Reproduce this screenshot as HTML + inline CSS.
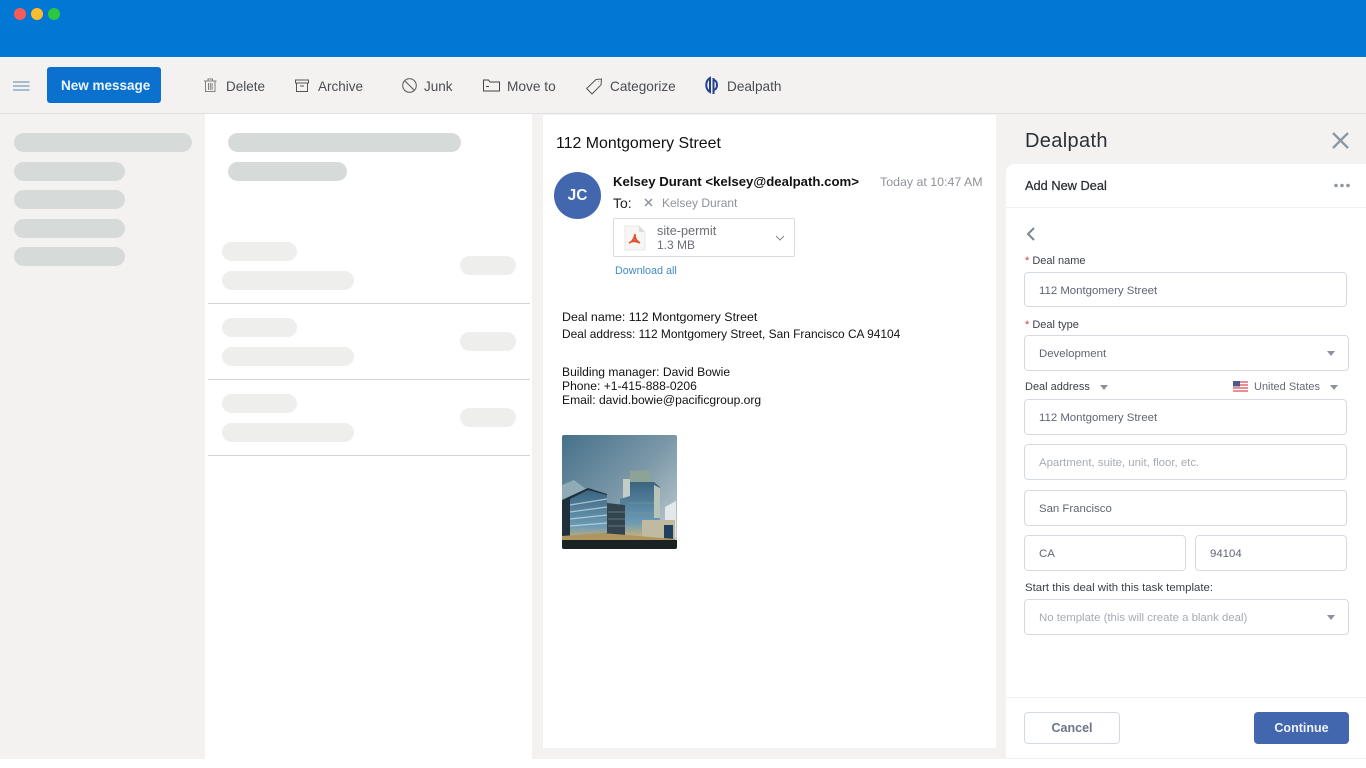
<!DOCTYPE html>
<html lang="en"><head><meta charset="utf-8"><title>Dealpath</title>
<style>
html,body{margin:0;padding:0;width:1366px;height:768px;overflow:hidden;background:#fff}
body{position:relative;font-family:"Liberation Sans",sans-serif;color:#333}
.a,.t,.i,.s{position:absolute}
.t{white-space:nowrap;line-height:1}
.s{background:#d6dbda;border-radius:10px}
.g{background:#eeeeed;border-radius:10px;position:absolute}
.i{box-sizing:border-box;background:#fff;border:1px solid #d5dae1;border-radius:4px;left:1024px;width:323px;height:36px;font-size:11.4px;color:#5f6670;line-height:36px;padding-left:14px;white-space:nowrap}
.tb{font-size:13.5px;color:#4a4d52;top:80px}
.l{font-size:11px;color:#3c4148}
.c{position:absolute;width:0;height:0;border-left:4.5px solid transparent;border-right:4.5px solid transparent;border-top:5px solid #8b929b}
.m{font-size:12.1px;color:#111}
hr{position:absolute;margin:0;border:0;height:1px;background:#d2d6d6;left:208px;width:322px}
svg{position:absolute;overflow:visible}
</style></head><body>
<div class="a" style="left:0;top:0;width:1366px;height:57px;background:#0277d3"></div>
<div class="a" style="left:14px;top:8px;width:12px;height:12px;border-radius:50%;background:#f95b57"></div>
<div class="a" style="left:31px;top:8px;width:12px;height:12px;border-radius:50%;background:#fbbb2e"></div>
<div class="a" style="left:48px;top:8px;width:12px;height:12px;border-radius:50%;background:#2cc840"></div>
<div class="a" style="left:0;top:57px;width:1366px;height:57px;background:#f3f2f1"></div>
<div class="a" style="left:0;top:113px;width:1366px;height:1px;background:#e0e0e2"></div>
<div class="a" style="left:0;top:114px;width:205px;height:645px;background:#f3f2f1"></div>
<div class="a" style="left:532px;top:114px;width:834px;height:645px;background:#f3f2f1"></div>
<div class="a" style="left:543px;top:115px;width:453px;height:633px;background:#fff"></div>

<svg style="left:13px;top:81px" width="18" height="11" fill="none" stroke="#5a88b0" stroke-width="1"><path d="M0 1h16.500M0 5h16.500M0 9h16.500"/></svg>
<div class="a" style="left:47px;top:67px;width:114px;height:36px;background:#0a71cf;border-radius:3px"></div>
<div class="t" style="left:61px;top:79px;font-size:13.5px;font-weight:700;color:#eef6fd">New message</div>

<svg style="left:204px;top:78px" width="13" height="15" fill="none" stroke="#808080" stroke-width="1"><path d="M0 3h12.500M4 3V1h4.500v2M1.500 3v10.500h9.500V3M4.500 5v7M6.300 5v7M8.100 5v7"/></svg>
<div class="t tb" style="left:226px">Delete</div>
<svg style="left:295px;top:79px" width="15" height="14" fill="none" stroke="#555" stroke-width="1"><path d="M.5 1h13v3h-13zM1.500 4v8.500h11V4M5 7h4"/></svg>
<div class="t tb" style="left:318px">Archive</div>
<svg style="left:402px;top:78px" width="15" height="15" fill="none" stroke="#666" stroke-width="1.100"><circle cx="7.500" cy="7.500" r="6.800"/><path d="M2.700 2.700l9.600 9.600"/></svg>
<div class="t tb" style="left:424px">Junk</div>
<svg style="left:483px;top:79px" width="17" height="13" fill="none" stroke="#444" stroke-width="1"><path d="M.5 12V1h5l1.500 2h9.500v9zM3 7.500h3"/></svg>
<div class="t tb" style="left:507px;font-size:13.700px">Move to</div>
<svg style="left:586px;top:78px" width="17" height="17" fill="none" stroke="#555" stroke-width="1"><path d="M.7 10.500L10 1.500l5.500-.5-.5 5.800-9 9.200zM12.300 3.500h.5"/></svg>
<div class="t tb" style="left:610px;font-size:13.600px">Categorize</div>
<svg style="left:704px;top:76px" width="16" height="19" fill="none" stroke="#23418f" stroke-width="2"><path d="M6 2C1 5 1 13 6 16zM9.500 2v16M10 4c4 1 4 9 0 10"/></svg>
<div class="t tb" style="left:727px;font-size:13.600px">Dealpath</div>

<div class="s" style="left:14px;top:133px;width:178px;height:19px"></div>
<div class="s" style="left:14px;top:162px;width:111px;height:19px"></div>
<div class="s" style="left:14px;top:190px;width:111px;height:19px"></div>
<div class="s" style="left:14px;top:219px;width:111px;height:19px"></div>
<div class="s" style="left:14px;top:247px;width:111px;height:19px"></div>
<div class="s" style="left:228px;top:133px;width:233px;height:19px"></div>
<div class="s" style="left:228px;top:162px;width:119px;height:19px"></div>

<div class="g" style="left:222px;top:242px;width:75px;height:19px"></div>
<div class="g" style="left:222px;top:271px;width:132px;height:19px"></div>
<div class="g" style="left:460px;top:256px;width:56px;height:19px"></div>
<hr style="top:303px">
<div class="g" style="left:222px;top:318px;width:75px;height:19px"></div>
<div class="g" style="left:222px;top:347px;width:132px;height:19px"></div>
<div class="g" style="left:460px;top:332px;width:56px;height:19px"></div>
<hr style="top:379px">
<div class="g" style="left:222px;top:394px;width:75px;height:19px"></div>
<div class="g" style="left:222px;top:423px;width:132px;height:19px"></div>
<div class="g" style="left:460px;top:408px;width:56px;height:19px"></div>
<hr style="top:455px">

<div class="t" style="left:556px;top:136px;font-size:15.900px;color:#111">112 Montgomery Street</div>
<div class="a" style="left:554px;top:172px;width:47px;height:47px;border-radius:50%;background:#4267ae"></div>
<div class="t" style="left:554px;top:188px;width:47px;text-align:center;font-size:15.500px;font-weight:700;color:#f3f6fb">JC</div>
<div class="t" style="left:613px;top:175px;font-size:13.200px;font-weight:700;color:#111">Kelsey Durant &lt;kelsey@dealpath.com&gt;</div>
<div class="t" style="left:880px;top:176px;font-size:12.400px;color:#8e9298">Today at 10:47 AM</div>
<div class="t" style="left:613px;top:196px;font-size:14px;color:#222">To:</div>
<svg style="left:644px;top:198px" width="9" height="9" fill="none" stroke="#8d939b" stroke-width="1.500"><path d="M1 1l7 7M8 1l-7 7"/></svg>
<div class="t" style="left:662px;top:197px;font-size:12px;color:#8e9298">Kelsey Durant</div>
<div class="a" style="left:613px;top:218px;width:180px;height:37px;border:1px solid #d8dadd;border-radius:2px"></div>
<svg style="left:624px;top:226px" width="22" height="25"><path d="M1 0h14l6 6v18H1z" fill="#f7f6f5" stroke="#e9e8e6"/><path d="M15 0v6h6z" fill="#dddcda"/><path d="M5 17c3-1 5-4 6-9 0 5 2 7 5 9-4-2-8-2-11 0z" fill="#dc6a4a" stroke="#d9512c" stroke-width="1.500"/></svg>
<div class="t" style="left:657px;top:225px;font-size:12.700px;color:#6b6f75">site-permit</div>
<div class="t" style="left:657px;top:239px;font-size:12px;color:#6b6f75">1.3 MB</div>
<svg style="left:775px;top:235px" width="10" height="7" fill="none" stroke="#858b92" stroke-width="1"><path d="M1 1l4 4 4-4"/></svg>
<div class="t" style="left:615px;top:266px;font-size:10.800px;color:#418bc8">Download all</div>

<div class="t m" style="left:562px;top:311px;font-size:12.400px">Deal name: 112 Montgomery Street</div>
<div class="t m" style="left:562px;top:329px;font-size:11.900px">Deal address: 112 Montgomery Street, San Francisco CA 94104</div>
<div class="t m" style="left:562px;top:366px">Building manager: David Bowie</div>
<div class="t m" style="left:562px;top:380px">Phone: +1-415-888-0206</div>
<div class="t m" style="left:562px;top:394px">Email: david.bowie@pacificgroup.org</div>

<svg style="left:562px;top:435px;border-radius:2px;overflow:hidden" width="115" height="114" viewBox="0 0 115 114">
<defs><linearGradient id="sky" x1="0" y1="0" x2="1" y2="1"><stop offset="0" stop-color="#45718a"/><stop offset=".5" stop-color="#7c98a8"/><stop offset="1" stop-color="#c9d3d8"/></linearGradient>
<linearGradient id="bl" x1="0" y1="0" x2="0" y2="1"><stop offset="0" stop-color="#3a6480"/><stop offset=".75" stop-color="#6d9cb5"/><stop offset="1" stop-color="#c8b07c"/></linearGradient></defs>
<rect width="115" height="114" fill="url(#sky)"/>
<path d="M103 72l11-6v36h-11z" fill="#e3e9eb"/>
<path d="M0 50l12-5 12 9-24 12z" fill="#8eabb6"/>
<path d="M61 44h8v32h-8z" fill="#c2cdc9"/>
<path d="M68 36l19-1 3 12H68z" fill="#8da396"/>
<path d="M68 47h24l6 5v50H58V64l10-3z" fill="url(#bl)"/>
<path d="M92 50l6 3v30h-6z" fill="#b9c4b8"/>
<path d="M45 68l18 2v33H45z" fill="#33444e"/>
<path d="M0 65l26-12 19 6v45H0z" fill="#1f2f3b"/>
<path d="M8 64l18-9 19 5v38l-37 6z" fill="url(#bl)"/>
<path d="M8 70l37-6M8 77l37-5M8 84l37-4M8 91l37-3" stroke="#c9dbe3" stroke-width="1.300" fill="none" opacity=".75"/>
<path d="M46 77h17M46 84h17M46 91h17M66 68h26M66 78h26M66 88h26" stroke="#7c97a4" stroke-width="1" fill="none" opacity=".6"/>
<path d="M80 85h33v19H80z" fill="#c0baa0"/>
<path d="M102 90h9v15h-9z" fill="#21405e"/>
<path d="M0 101l40-3 73 6v4H0z" fill="#b0955f"/>
<rect y="105" width="115" height="9" fill="#1b2224"/>
</svg>

<div class="t" style="left:1025px;top:131px;font-size:20px;letter-spacing:.35px;color:#2b2f36">Dealpath</div>
<svg style="left:1332px;top:132px" width="17" height="17" fill="none" stroke="#8b97a3" stroke-width="2.300"><path d="M1 1l15 15M16 1L1 16"/></svg>
<div class="a" style="left:1006px;top:164px;width:360px;height:594px;background:#fff;border-radius:8px 0 0 0"></div>
<div class="a" style="left:1006px;top:207px;width:360px;height:1px;background:#eef0f2"></div>
<div class="t" style="left:1025px;top:180px;font-size:12.800px;color:#2b2f36;-webkit-text-stroke:.25px #2b2f36">Add New Deal</div>
<svg style="left:1334px;top:183px" width="17" height="5" fill="#8f969e"><circle cx="2" cy="2.500" r="1.800"/><circle cx="8" cy="2.500" r="1.800"/><circle cx="14" cy="2.500" r="1.800"/></svg>
<svg style="left:1026px;top:227px" width="10" height="14" fill="none" stroke="#7b8794" stroke-width="2"><path d="M8 1L2 7l6 6"/></svg>

<div class="t l" style="left:1025px;top:256px"><span style="color:#d9363e">*</span> Deal name</div>
<div class="i" style="top:272px;height:35px">112 Montgomery Street</div>
<div class="t l" style="left:1025px;top:320px"><span style="color:#d9363e">*</span> Deal type</div>
<div class="i" style="top:335px;width:325px">Development</div>
<div class="c" style="left:1327px;top:351px"></div>
<div class="t l" style="left:1025px;top:382px">Deal address</div>
<div class="c" style="left:1100px;top:385px"></div>
<svg style="left:1233px;top:381px" width="15" height="11"><rect width="15" height="11" fill="#ea8d95"/><path d="M0 2.500h15M0 5.500h15M0 8.500h15" stroke="#fff" stroke-width="1"/><rect width="7" height="5.500" fill="#4e5a8c"/></svg>
<div class="t l" style="left:1254px;top:382px;color:#666c74">United States</div>
<div class="c" style="left:1330px;top:385px"></div>
<div class="i" style="top:399px">112 Montgomery Street</div>
<div class="i" style="top:444px;color:#a6abb2">Apartment, suite, unit, floor, etc.</div>
<div class="i" style="top:490px">San Francisco</div>
<div class="i" style="top:535px;width:162px">CA</div>
<div class="i" style="top:535px;left:1195px;width:152px">94104</div>
<div class="t l" style="left:1025px;top:583px;font-size:11.400px">Start this deal with this task template:</div>
<div class="i" style="top:599px;width:325px;color:#a6abb2">No template (this will create a blank deal)</div>
<div class="c" style="left:1327px;top:615px"></div>
<div class="a" style="left:1006px;top:697px;width:360px;height:1px;background:#eef0f2"></div>
<div class="a" style="left:1024px;top:712px;width:94px;height:30px;border:1px solid #d5dae1;border-radius:4px"></div>
<div class="t" style="left:1024px;top:722px;width:96px;text-align:center;font-size:12.500px;font-weight:700;color:#6b7685">Cancel</div>
<div class="a" style="left:1254px;top:712px;width:95px;height:32px;background:#4267ae;border-radius:4px"></div>
<div class="t" style="left:1254px;top:722px;width:95px;text-align:center;font-size:12.500px;font-weight:700;color:#eef2f8">Continue</div>
</body></html>
